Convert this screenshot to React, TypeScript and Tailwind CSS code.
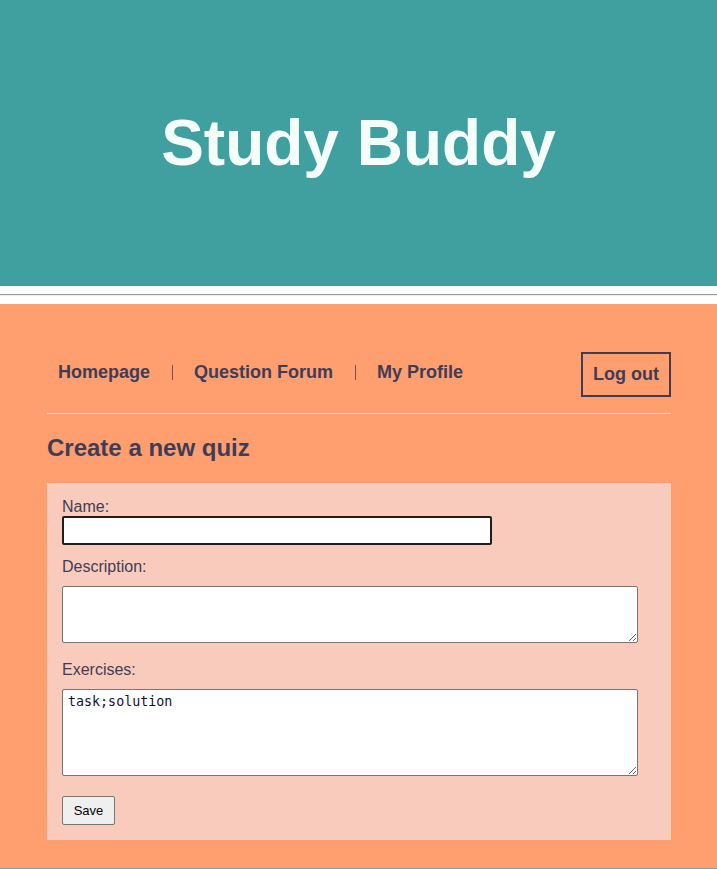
export default function App() {
  return (
    <div className="min-h-screen bg-white font-['Liberation_Sans',Arial,sans-serif] text-[#3f3d56]">
      <header className="flex h-[286px] items-center justify-center bg-[#40a0a0]">
        <h1 className="text-[64px] font-bold leading-none text-[#f5fffa]">Study Buddy</h1>
      </header>

      <div className="pt-2 pb-[8px]">
        <hr className="border-t border-b border-t-[#9a9a9a] border-b-[#efefef]" />
      </div>

      <main className="bg-[#ff9e6f] pl-[47px] pr-[46px] pt-[48px] pb-[28px]">
        <nav className="flex items-start justify-between border-b border-[#dfe8ec] pb-4">
          <div className="flex items-center gap-[21.5px] pl-[11px] pt-[10px] text-[18px] font-bold leading-[21px]">
            <a href="#">Homepage</a>
            <span className="h-[15px] w-px bg-[#74525a]" />
            <a href="#">Question Forum</a>
            <span className="h-[15px] w-px bg-[#74525a]" />
            <a href="#">My Profile</a>
          </div>
          <button className="border-2 border-[#3f3d56] p-[10px] text-[18px] font-bold leading-[21px]">
            Log out
          </button>
        </nav>

        <h2 className="mt-[20px] mb-[21px] text-[24px] font-bold leading-[28px]">Create a new quiz</h2>

        <form className="bg-[#f9cbbc] px-[15px] pt-[14px] pb-[15px]" onSubmit={(e) => e.preventDefault()}>
          <label className="block pt-px text-[16px] leading-[18px]">Name:</label>
          <input
            type="text"
            className="block h-[29px] w-[430px] rounded-[2px] border-2 border-[#1f1f1f] bg-white px-1 text-[13px]"
          />

          <label className="mt-[12px] block pt-px text-[16px] leading-[18px]">Description:</label>
          <textarea className="mt-[10px] block h-[57px] w-[576px] rounded-[2px] border border-[#767676] bg-white p-[2px] font-['DejaVu_Sans_Mono',monospace] text-[13.333px]" />

          <label className="mt-[17px] block pt-px text-[16px] leading-[18px]">Exercises:</label>
          <textarea
            defaultValue="task;solution"
            className="mt-[10px] block h-[87px] w-[576px] rounded-[2px] border border-[#767676] bg-white px-[5px] pt-[4px] pb-[3px] font-['DejaVu_Sans_Mono',monospace] text-[13.333px] leading-[16px] text-[#111133]"
          />

          <button
            type="submit"
            className="mt-[20px] block h-[29px] w-[53px] rounded-[2px] border border-[#767676] bg-[#efefef] text-[13px] text-black"
          >
            Save
          </button>
        </form>
      </main>

      <footer className="h-10 bg-[#7fa7a3]" />
    </div>
  );
}
